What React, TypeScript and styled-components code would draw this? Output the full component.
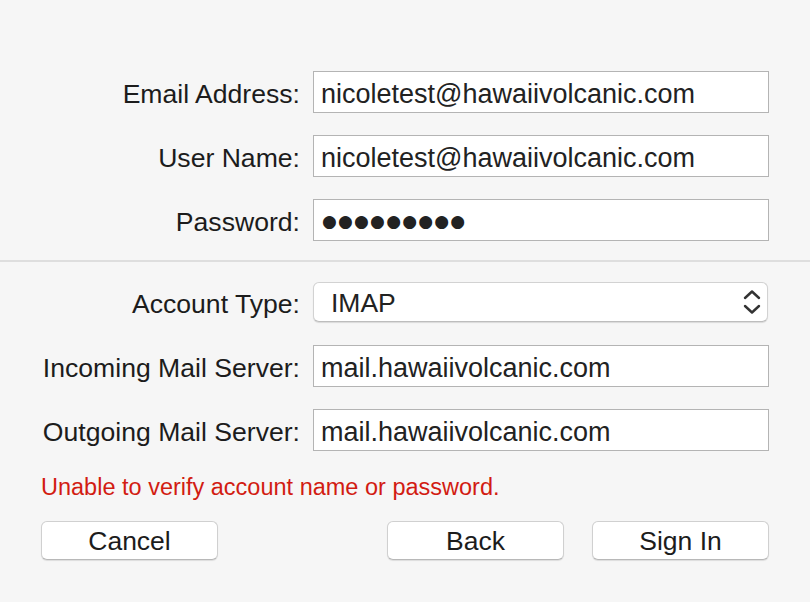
import React from "react";
import styled, { createGlobalStyle } from "styled-components";

const Global = createGlobalStyle`
  html, body { margin: 0; padding: 0; background: #f6f6f6; }
  * { box-sizing: border-box; }
`;

const Page = styled.div`
  width: 810px;
  height: 602px;
  padding: 71px 41px 0;
  background: #f6f6f6;
  font-family: "Liberation Sans", Arial, sans-serif;
  color: #1c1c1c;
  overflow: hidden;
`;

const Form = styled.div`
  display: grid;
  grid-template-columns: 259px 1fr;
  grid-auto-rows: 42px;
  column-gap: 13px;
  row-gap: 22px;
  align-items: center;
`;

const Label = styled.label`
  font-size: 26.6px;
  padding-top: 5px;
  text-align: right;
  white-space: nowrap;
  color: #1c1c1c;
`;

const Field = styled.div`
  height: 42px;
  background: #fff;
  border: 1px solid #b4b4b4;
  padding: 5px 0 0 7px;
  display: flex;
  align-items: center;
  font-size: 27px;
  color: #222;
  white-space: nowrap;
  overflow: hidden;
`;

const Dots = styled.span`
  font-family: "DejaVu Sans", sans-serif;
  font-size: 17px;
  letter-spacing: 1.2px;
  color: #222;
  padding-left: 1px;
  margin-top: -4px;
`;

const Divider = styled.div`
  height: 2px;
  background: #dedede;
  margin: 19px -41px 19px;
`;

const Select = styled.div`
  height: 40px;
  margin-right: 1px;
  background: #fff;
  border: 1px solid #d2d2d2;
  border-bottom-color: #bdbdbd;
  border-radius: 6px;
  box-shadow: 0 1px 1px rgba(0, 0, 0, 0.12);
  display: flex;
  align-items: center;
  justify-content: space-between;
  padding: 0 6px 0 17px;
  font-size: 26.5px;
  color: #222;
`;

const SelectValue = styled.span`
  padding-top: 2px;
`;

const Error = styled.div`
  margin-top: 22px;
  font-size: 23.5px;
  line-height: 28px;
  color: #d21c12;
`;

const Buttons = styled.div`
  margin-top: 20px;
  display: flex;
  align-items: center;
  gap: 28px;
`;

const Spacer = styled.div`
  flex: 1;
`;

const Button = styled.button`
  width: 177px;
  height: 39px;
  background: #fff;
  border: 1px solid #d0d0d0;
  border-bottom-color: #b8b8b8;
  border-radius: 6px;
  box-shadow: 0 1px 1px rgba(0, 0, 0, 0.1);
  font-family: "Liberation Sans", Arial, sans-serif;
  font-size: 26.5px;
  color: #1c1c1c;
  padding: 2px 0 0;
  display: flex;
  align-items: center;
  justify-content: center;
`;

const Chevrons = () => (
  <svg width="18" height="26" viewBox="0 0 18 26" fill="none">
    <path d="M2 9 L9 2.5 L16 9" stroke="#333" strokeWidth="2.4" strokeLinecap="round" strokeLinejoin="round" />
    <path d="M2 17 L9 23.5 L16 17" stroke="#333" strokeWidth="2.4" strokeLinecap="round" strokeLinejoin="round" />
  </svg>
);

export default function App() {
  return (
    <>
      <Global />
      <Page>
        <Form>
          <Label>Email Address:</Label>
          <Field>nicoletest@hawaiivolcanic.com</Field>
          <Label>User Name:</Label>
          <Field>nicoletest@hawaiivolcanic.com</Field>
          <Label>Password:</Label>
          <Field>
            <Dots>●●●●●●●●●</Dots>
          </Field>
        </Form>
        <Divider />
        <Form>
          <Label>Account Type:</Label>
          <Select>
            <SelectValue>IMAP</SelectValue>
            <Chevrons />
          </Select>
          <Label>Incoming Mail Server:</Label>
          <Field>mail.hawaiivolcanic.com</Field>
          <Label>Outgoing Mail Server:</Label>
          <Field>mail.hawaiivolcanic.com</Field>
        </Form>
        <Error>Unable to verify account name or password.</Error>
        <Buttons>
          <Button>Cancel</Button>
          <Spacer />
          <Button>Back</Button>
          <Button>Sign In</Button>
        </Buttons>
      </Page>
    </>
  );
}
